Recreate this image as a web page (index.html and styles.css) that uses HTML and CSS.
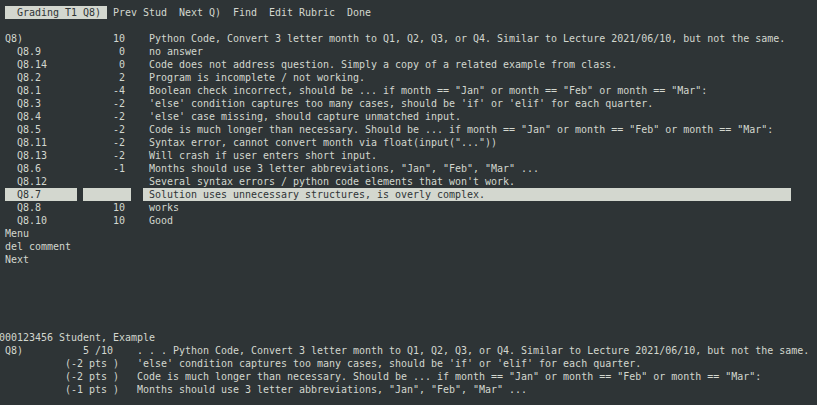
FILE: index.html
```html
<!DOCTYPE html>
<html>
<head>
<meta charset="utf-8">
<link rel="stylesheet" href="styles.css">
</head>
<body>
<div class="screen">
  <div class="menubar">
    <span class="title">  Grading T1 Q8) </span>
    <span class="mi first">Prev Stud</span>
    <span class="mi">Next Q)</span>
    <span class="mi">Find</span>
    <span class="mi">Edit Rubric</span>
    <span class="mi">Done</span>
  </div>
  <div class="blank"></div>
  <div class="rubric">
    <div class="row"><span class="label">Q8)</span><span class="pts">10</span><span class="desc">Python Code, Convert 3 letter month to Q1, Q2, Q3, or Q4. Similar to Lecture 2021/06/10, but not the same.</span></div>
    <div class="row"><span class="label sub">Q8.9</span><span class="pts">0</span><span class="desc">no answer</span></div>
    <div class="row"><span class="label sub">Q8.14</span><span class="pts">0</span><span class="desc">Code does not address question. Simply a copy of a related example from class.</span></div>
    <div class="row"><span class="label sub">Q8.2</span><span class="pts">2</span><span class="desc">Program is incomplete / not working.</span></div>
    <div class="row"><span class="label sub">Q8.1</span><span class="pts">-4</span><span class="desc">Boolean check incorrect, should be ... if month == "Jan" or month == "Feb" or month == "Mar":</span></div>
    <div class="row"><span class="label sub">Q8.3</span><span class="pts">-2</span><span class="desc">'else' condition captures too many cases, should be 'if' or 'elif' for each quarter.</span></div>
    <div class="row"><span class="label sub">Q8.4</span><span class="pts">-2</span><span class="desc">'else' case missing, should capture unmatched input.</span></div>
    <div class="row"><span class="label sub">Q8.5</span><span class="pts">-2</span><span class="desc">Code is much longer than necessary. Should be ... if month == "Jan" or month == "Feb" or month == "Mar":</span></div>
    <div class="row"><span class="label sub">Q8.11</span><span class="pts">-2</span><span class="desc">Syntax error, cannot convert month via float(input("..."))</span></div>
    <div class="row"><span class="label sub">Q8.13</span><span class="pts">-2</span><span class="desc">Will crash if user enters short input.</span></div>
    <div class="row"><span class="label sub">Q8.6</span><span class="pts">-1</span><span class="desc">Months should use 3 letter abbreviations, "Jan", "Feb", "Mar" ...</span></div>
    <div class="row"><span class="label sub">Q8.12</span><span class="pts"></span><span class="desc">Several syntax errors / python code elements that won't work.</span></div>
    <div class="row selected"><span class="label sub">Q8.7</span><span class="pts"></span><span class="desc">Solution uses unnecessary structures, is overly complex.</span></div>
    <div class="row"><span class="label sub">Q8.8</span><span class="pts">10</span><span class="desc">works</span></div>
    <div class="row"><span class="label sub">Q8.10</span><span class="pts">10</span><span class="desc">Good</span></div>
  </div>
  <div class="actions">
    <div class="line">Menu</div>
    <div class="line">del comment</div>
    <div class="line">Next</div>
  </div>
  <div class="summary">
    <div class="line student">000123456 Student, Example</div>
    <div class="srow"><span class="scol">Q8)</span><span class="spts">   5 /10</span><span class="sdesc">. . . Python Code, Convert 3 letter month to Q1, Q2, Q3, or Q4. Similar to Lecture 2021/06/10, but not the same.</span></div>
    <div class="srow"><span class="scol"></span><span class="spts">(-2 pts )</span><span class="sdesc">'else' condition captures too many cases, should be 'if' or 'elif' for each quarter.</span></div>
    <div class="srow"><span class="scol"></span><span class="spts">(-2 pts )</span><span class="sdesc">Code is much longer than necessary. Should be ... if month == "Jan" or month == "Feb" or month == "Mar":</span></div>
    <div class="srow"><span class="scol"></span><span class="spts">(-1 pts )</span><span class="sdesc">Months should use 3 letter abbreviations, "Jan", "Feb", "Mar" ...</span></div>
  </div>
</div>
</body>
</html>
```

FILE: styles.css
```css
html, body {
  margin: 0;
  padding: 0;
  background: #2e3436;
  height: 100%;
  overflow: hidden;
}

.screen {
  font-family: "DejaVu Sans Mono", "Liberation Mono", monospace;
  font-size: 9.97px;
  line-height: 13px;
  color: #d3d7cf;
  padding: 6px 0 0 5px;
}

.menubar span,
.row span,
.srow span,
.line {
  white-space: pre;
}

.menubar {
  display: flex;
  height: 13px;
}

.menubar .title {
  background: #d3d7cf;
  color: #2e3436;
  width: 102px;
}

.menubar .mi {
  margin-left: 12px;
}

.menubar .mi.first {
  margin-left: 6px;
}

.blank {
  height: 13px;
}

.row {
  display: flex;
  height: 13px;
}

.label {
  width: 72px;
  box-sizing: border-box;
}

.label.sub {
  padding-left: 12px;
}

.pts {
  width: 48px;
  margin-left: 6px;
  padding-right: 6px;
  box-sizing: border-box;
  text-align: right;
}

.desc {
  width: 648px;
  margin-left: 12px;
  padding-left: 6px;
  box-sizing: border-box;
}

.row.selected .label,
.row.selected .pts,
.row.selected .desc {
  background: #d3d7cf;
  color: #2e3436;
}

.line {
  height: 13px;
}

.summary {
  margin-top: 65px;
}

.student {
  margin-left: -6px;
}

.srow {
  display: flex;
  height: 13px;
}

.scol {
  width: 60px;
}

.spts {
  width: 72px;
}
```
